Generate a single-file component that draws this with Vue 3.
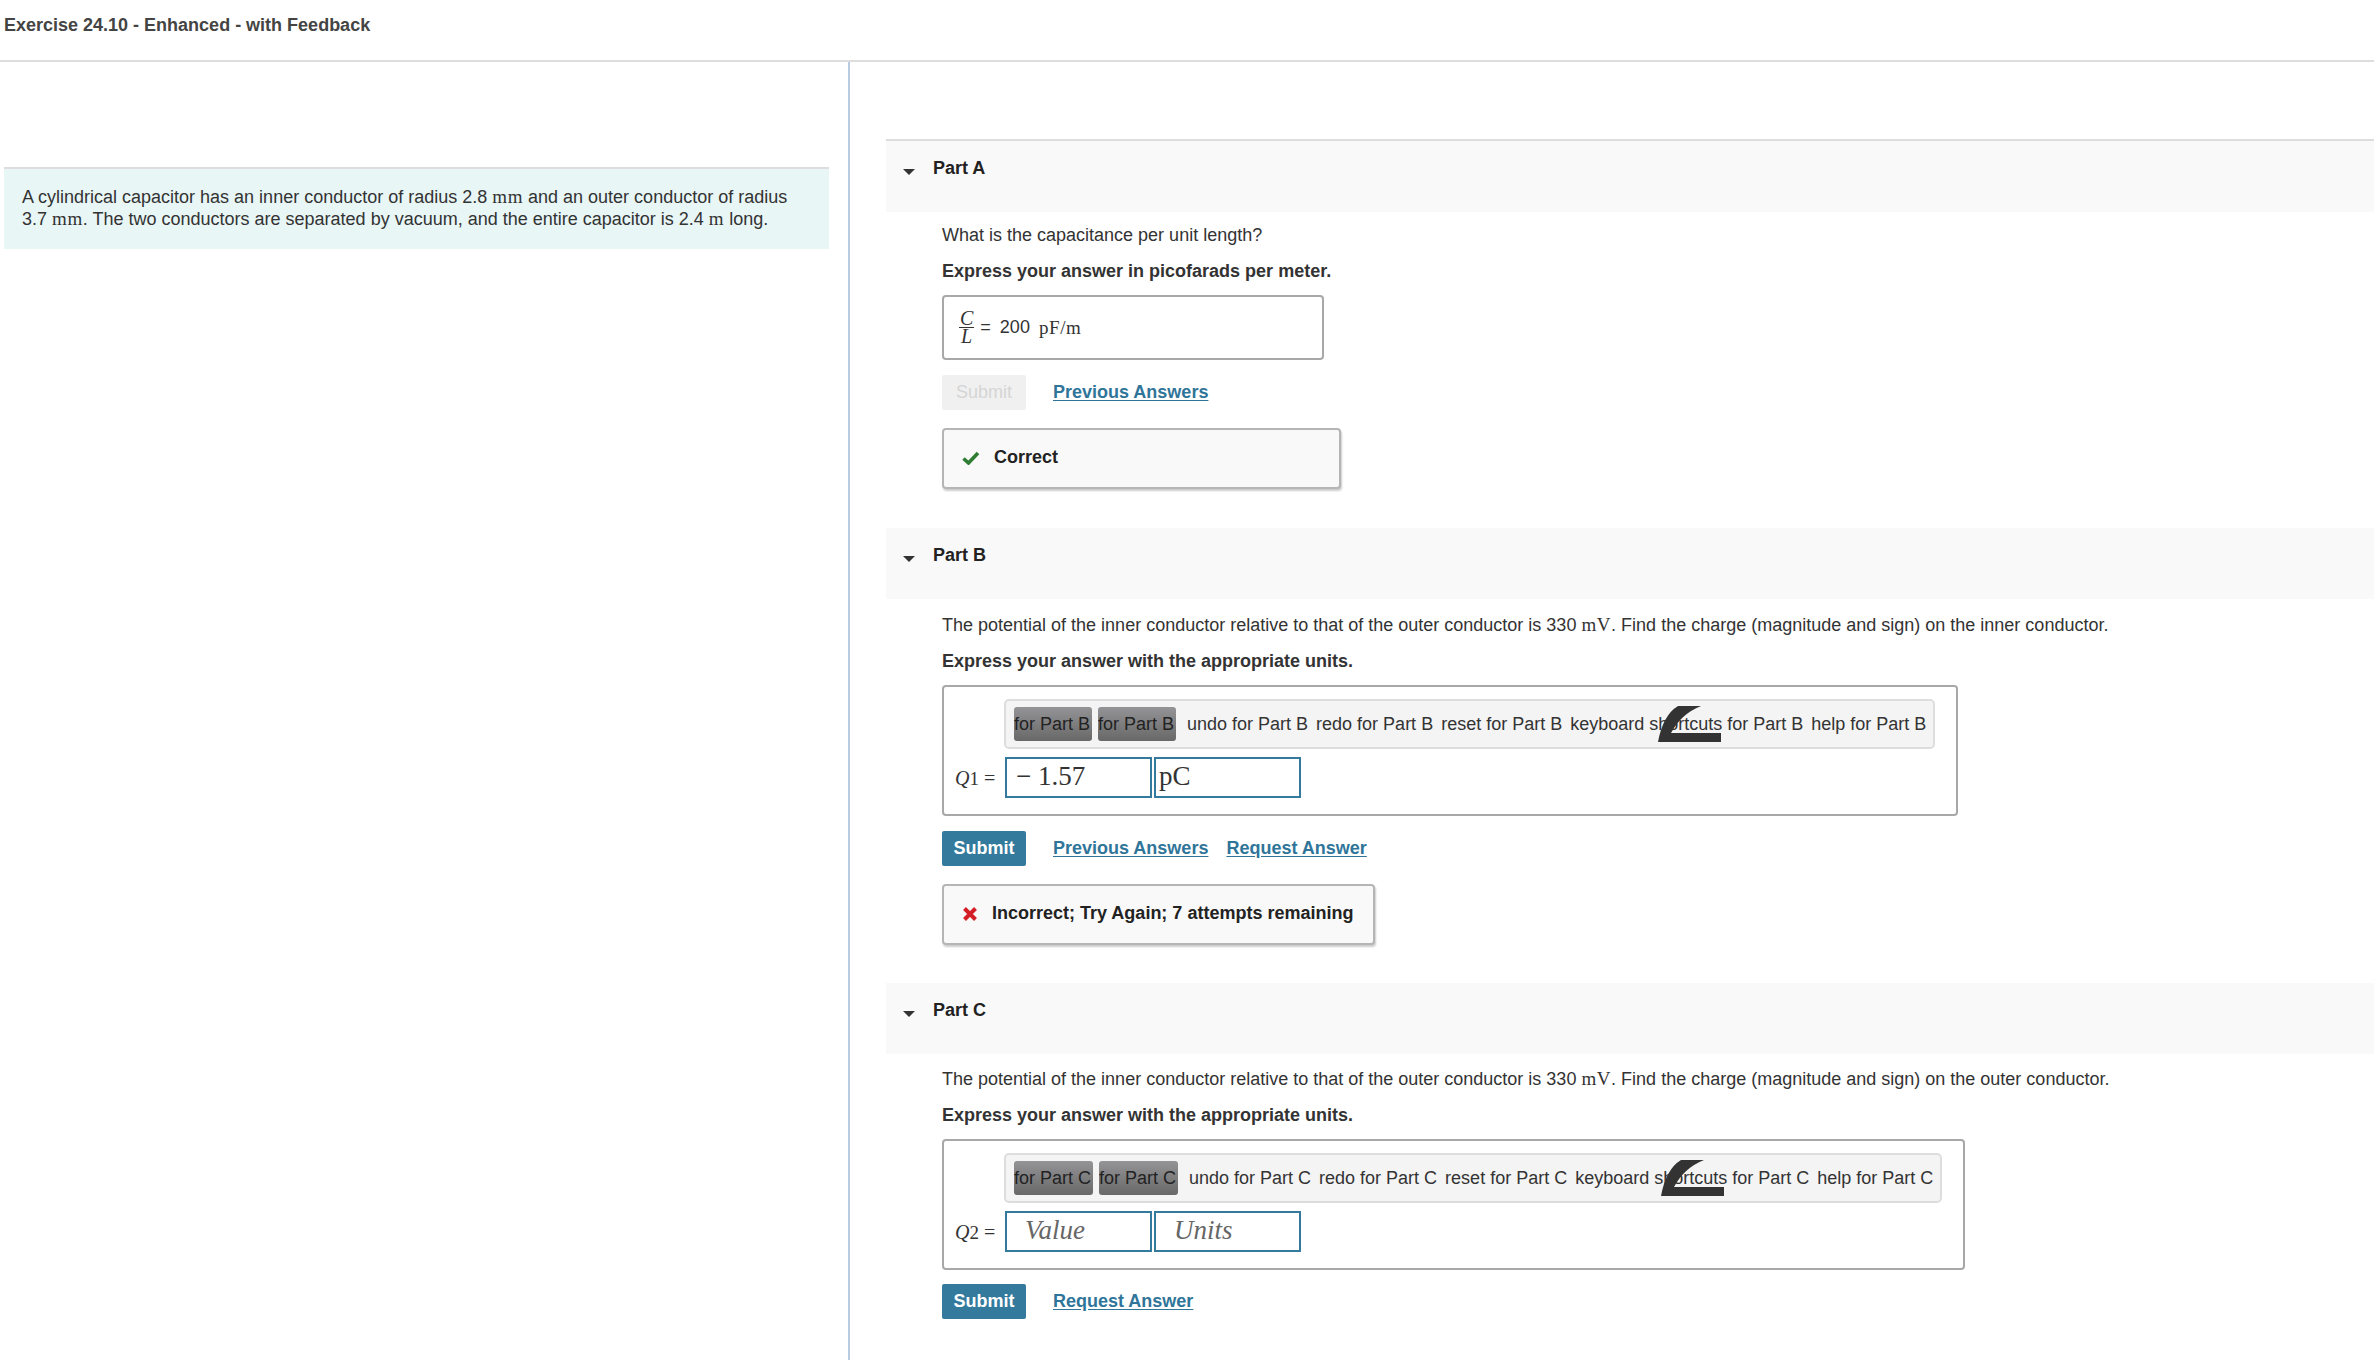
<script setup>
const arrow = 'M0 37 Q5 10 20 1 L43 1 Q23 9 13 28 L63 28 L63 37 Z'
const parts = [
  { id: 'B', sym: 'Q', sub: '1', target: 'inner', val: '− 1.57', unit: 'pC', ph: false, prev: true, fb: true },
  { id: 'C', sym: 'Q', sub: '2', target: 'outer', val: 'Value', unit: 'Units', ph: true, prev: false, fb: false },
]
const tools = ['undo', 'redo', 'reset', 'keyboard shortcuts', 'help']
</script>

<template>
  <div class="page">
    <header class="top"><h1>Exercise 24.10 - Enhanced - with Feedback</h1></header>
    <div class="cols">
      <aside class="left">
        <div class="intro">
          <div>A cylindrical capacitor has an inner conductor of radius 2.8 <span class="m">mm</span> and an outer conductor of radius</div>
          <div>3.7 <span class="m">mm</span>. The two conductors are separated by vacuum, and the entire capacitor is 2.4 <span class="m">m</span> long.</div>
        </div>
      </aside>
      <main class="right">
        <section class="part first">
          <div class="phead"><i class="caret"></i><span>Part A</span></div>
          <div class="pbody">
            <p class="q">What is the capacitance per unit length?</p>
            <p class="ins">Express your answer in picofarads per meter.</p>
            <div class="ansbox">
              <span class="frac"><em>C</em><em>L</em></span>
              <span class="eq">=</span><span>200</span><span class="m unit">pF/m</span>
            </div>
            <div class="actions">
              <button class="submit off">Submit</button>
              <a class="lnk">Previous Answers</a>
            </div>
            <div class="fb ok">
              <svg width="18" height="14" viewBox="0 0 18 14"><path d="M1.5 7.5 L6.5 12 L16 2" fill="none" stroke="#2e7d32" stroke-width="3.6"/></svg>
              <span>Correct</span>
            </div>
          </div>
        </section>

        <section v-for="p in parts" :key="p.id" class="part" :class="'part' + p.id">
          <div class="phead"><i class="caret"></i><span>Part {{ p.id }}</span></div>
          <div class="pbody">
            <p class="q">The potential of the inner conductor relative to that of the outer conductor is 330 <span class="m">mV</span>. Find the charge (magnitude and sign) on the {{ p.target }} conductor.</p>
            <p class="ins">Express your answer with the appropriate units.</p>
            <div class="editor">
              <div class="toolbar">
                <svg class="swoosh" width="63" height="37" viewBox="0 0 63 37"><path :d="arrow" fill="#333"/></svg>
                <span class="tbtn">for Part {{ p.id }}</span>
                <span class="tbtn">for Part {{ p.id }}</span>
                <span v-for="t in tools" :key="t" class="tool">{{ t }} for Part {{ p.id }}</span>
              </div>
              <div class="inrow">
                <span class="lab"><em>{{ p.sym }}</em><small>{{ p.sub }}</small> =</span>
                <span class="inp" :class="{ ph: p.ph }">{{ p.val }}</span>
                <span class="inp" :class="{ ph: p.ph, tight: !p.ph }">{{ p.unit }}</span>
              </div>
            </div>
            <div class="actions">
              <button class="submit">Submit</button>
              <a v-if="p.prev" class="lnk">Previous Answers</a>
              <a class="lnk">Request Answer</a>
            </div>
            <div v-if="p.fb" class="fb bad">
              <svg width="16" height="16" viewBox="0 0 16 16"><path d="M2.5 2.5 L13.5 13.5 M13.5 2.5 L2.5 13.5" fill="none" stroke="#d32027" stroke-width="4"/></svg>
              <span>Incorrect; Try Again; 7 attempts remaining</span>
            </div>
          </div>
        </section>
      </main>
    </div>
  </div>
</template>

<style scoped>
.page { width: 2374px; height: 1360px; overflow: hidden; background: #fff; color: #222; font-family: "Liberation Sans", Arial, sans-serif; font-size: 18px; }
.top { height: 60px; border-bottom: 2px solid #ddd; box-sizing: content-box; display: flex; align-items: flex-start; }
h1 { margin: 15px 0 0 4px; font-size: 18px; line-height: 20px; font-weight: 700; color: #444; }
.cols { display: grid; grid-template-columns: 850px 1fr; height: 1298px; }
.left { border-right: 2px solid #b9cbe0; padding: 105px 19px 0 4px; box-sizing: border-box; }
.intro { background: #e8f6f6; border-top: 2px solid #ddd; padding: 17px 18px 0; height: 82px; box-sizing: border-box; line-height: 22px; color: #333; }
.intro div { height: 22px; white-space: nowrap; }
.m { font-family: "Liberation Serif", "DejaVu Serif", serif; font-size: 19px; letter-spacing: .6px; }
.right { padding: 77px 0 0 36px; min-width: 0; }
.part.first { border-top: 2px solid #ddd; }
.phead { background: #f9f9f9; height: 71px; display: flex; align-items: flex-start; font-weight: 700; padding: 14px 0 0 17px; box-sizing: border-box; line-height: 26px; }
.caret { width: 0; height: 0; border: 6px solid transparent; border-top-color: #333; border-bottom: 0; margin: 14px 18px 0 0; }
.pbody { padding-left: 56px; }
.q { margin: 0; padding-top: 12px; line-height: 24px; color: #333; }
.first .q { padding-top: 11px; }
.partB .q { padding-top: 14px; }
.partC .q { padding-top: 13px; }
.ins { margin: 12px 0 0; line-height: 24px; font-weight: 700; color: #333; }
.ansbox { width: 382px; height: 65px; margin-top: 12px; box-sizing: border-box; border: 2px solid #a8a8a8; border-radius: 4px; display: flex; align-items: center; padding-left: 15px; color: #333; }
.frac { display: inline-flex; flex-direction: column; font-family: "Liberation Serif", serif; font-size: 20px; line-height: 17px; align-items: center; margin-right: 6px; }
.frac em:first-child { border-bottom: 1.5px solid #333; padding: 0 1px; }
.eq { margin-right: 9px; }
.unit { margin-left: 9px; }
.actions { display: flex; align-items: center; gap: 18px; margin-top: 15px; height: 35px; }
.submit { width: 84px; height: 35px; border: 0; border-radius: 2px; background: #337a9c; color: #fff; font: 700 18px "Liberation Sans", Arial, sans-serif; margin-right: 9px; padding: 0; }
.submit.off { background: #f0f0f0; color: #d5d5d5; font-weight: 400; }
.lnk { color: #2f7599; font-weight: 700; text-decoration: underline; text-underline-offset: 2px; }
.fb { display: flex; align-items: center; margin-top: 18px; height: 61px; box-sizing: border-box; background: #f9f9f9; border: 2px solid #b5b5b5; border-radius: 4px; box-shadow: 1px 2px 2px #ccc; font-weight: 700; color: #222; padding-bottom: 2px; }
.fb.ok { width: 399px; padding-left: 18px; gap: 14px; }
.fb.bad { width: 433px; padding-left: 18px; gap: 14px; }
.partB { margin-top: 39px; }
.partC { margin-top: 38px; }
.partC .actions { margin-top: 14px; }
.editor { margin-top: 12px; height: 131px; box-sizing: border-box; border: 2px solid #a8a8a8; border-radius: 4px; padding: 12px 0 0 60px; }
.partB .editor { width: 1016px; }
.partC .editor { width: 1023px; }
.toolbar { position: relative; display: flex; align-items: center; height: 50px; box-sizing: border-box; border: 2px solid #ddd; border-radius: 5px; background: #f4f4f4; padding: 0 8px; white-space: nowrap; color: #333; }
.partB .toolbar { width: 931px; }
.partC .toolbar { width: 938px; }
.tbtn { position: relative; width: 78px; flex: none; height: 34px; line-height: 34px; overflow: hidden; margin-right: 6px; background: linear-gradient(#949497, #686868); border-radius: 3px; color: #222; }
.tbtn:nth-of-type(2) { margin-right: 3px; }
.partC .tbtn { width: 79px; }
.tool { position: relative; margin-left: 8px; }
.swoosh { position: absolute; right: 212px; top: 4px; }
.partC .swoosh { right: 216px; }
.inrow { display: flex; align-items: center; margin: 8px 0 0 -49px; }
.lab { width: 50px; font-family: "Liberation Serif", serif; font-size: 20px; color: #333; white-space: nowrap; padding-top: 2px; }
.lab small { font-size: 19px; }
.inp { width: 147px; height: 41px; box-sizing: border-box; border: 2px solid #337a9c; margin-right: 2px; font-family: "Liberation Serif", serif; font-size: 27px; line-height: 34px; padding-left: 9px; color: #333; }
.inp.tight { padding-left: 3px; }
.inp.ph { font-style: italic; color: #666; padding-left: 18px; }
</style>

<style>
html, body { margin: 0; overflow: hidden; }
</style>
